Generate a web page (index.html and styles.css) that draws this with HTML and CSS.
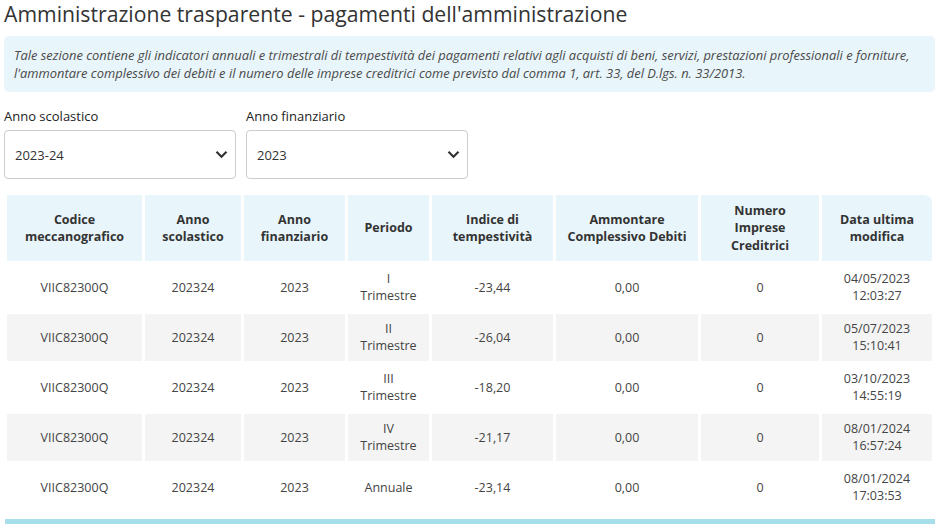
FILE: index.html
```html
<!DOCTYPE html>
<html lang="it">
<head>
<meta charset="utf-8">
<link rel="stylesheet" href="styles.css">
</head>
<body>
<div class="page">
  <h1 class="title">Amministrazione trasparente - pagamenti dell'amministrazione</h1>
  <div class="info">Tale sezione contiene gli indicatori annuali e trimestrali di tempestività dei pagamenti relativi agli acquisti di beni, servizi, prestazioni professionali e forniture, l'ammontare complessivo dei debiti e il numero delle imprese creditrici come previsto dal comma 1, art. 33, del D.lgs. n. 33/2013.</div>
  <div class="filters">
    <div class="field f1">
      <div class="label">Anno scolastico</div>
      <div class="select"><span>2023-24</span><svg class="chev" width="13" height="9" viewBox="0 0 13 9"><path d="M1.5 1.8 L6.5 6.8 L11.5 1.8" fill="none" stroke="#333" stroke-width="2.2"/></svg></div>
    </div>
    <div class="field f2">
      <div class="label">Anno finanziario</div>
      <div class="select"><span>2023</span><svg class="chev" width="13" height="9" viewBox="0 0 13 9"><path d="M1.5 1.8 L6.5 6.8 L11.5 1.8" fill="none" stroke="#333" stroke-width="2.2"/></svg></div>
    </div>
  </div>
  <table class="grid">
    <colgroup>
      <col class="c1"><col class="c2"><col class="c3"><col class="c4"><col class="c5"><col class="c6"><col class="c7"><col class="c8">
    </colgroup>
    <thead>
      <tr>
        <th>Codice<br>meccanografico</th>
        <th>Anno<br>scolastico</th>
        <th>Anno<br>finanziario</th>
        <th>Periodo</th>
        <th>Indice di<br>tempestività</th>
        <th>Ammontare<br>Complessivo Debiti</th>
        <th>Numero<br>Imprese<br>Creditrici</th>
        <th class="last">Data ultima<br>modifica</th>
      </tr>
    </thead>
    <tbody>
      <tr><td>VIIC82300Q</td><td>202324</td><td>2023</td><td>I<br>Trimestre</td><td>-23,44</td><td>0,00</td><td>0</td><td>04/05/2023<br>12:03:27</td></tr>
      <tr><td>VIIC82300Q</td><td>202324</td><td>2023</td><td>II<br>Trimestre</td><td>-26,04</td><td>0,00</td><td>0</td><td>05/07/2023<br>15:10:41</td></tr>
      <tr><td>VIIC82300Q</td><td>202324</td><td>2023</td><td>III<br>Trimestre</td><td>-18,20</td><td>0,00</td><td>0</td><td>03/10/2023<br>14:55:19</td></tr>
      <tr><td>VIIC82300Q</td><td>202324</td><td>2023</td><td>IV<br>Trimestre</td><td>-21,17</td><td>0,00</td><td>0</td><td>08/01/2024<br>16:57:24</td></tr>
      <tr><td>VIIC82300Q</td><td>202324</td><td>2023</td><td>Annuale</td><td>-23,14</td><td>0,00</td><td>0</td><td>08/01/2024<br>17:03:53</td></tr>
    </tbody>
  </table>
  <div class="bar"></div>
</div>
</body>
</html>
```

FILE: styles.css
```css
html, body {
  margin: 0;
  padding: 0;
  background: #fff;
}
body {
  font-family: "Open Sans", "Noto Sans", sans-serif;
  color: #333;
}
.page {
  padding: 0 4px;
  width: 931px;
}
.title {
  margin: 0;
  padding-top: 0;
  font-size: 21.2px;
  line-height: 28px;
  font-weight: 400;
  color: #333;
}
.info {
  margin-top: 8px;
  background: #e8f5fa;
  border-radius: 5px;
  padding: 10px 10px;
  font-size: 12.9px;
  line-height: 18px;
  font-style: italic;
  color: #4a4a4a;
}
.filters {
  display: flex;
  gap: 10px;
  margin-top: 15px;
}
.f1 { width: 232px; }
.f2 { width: 222px; }
.label {
  font-size: 13px;
  line-height: 18px;
  color: #222;
  margin-bottom: 5px;
}
.select {
  box-sizing: border-box;
  height: 49px;
  border: 1px solid #ccc;
  border-radius: 4px;
  display: flex;
  align-items: center;
  justify-content: space-between;
  padding: 0 7px 0 10px;
  font-size: 13px;
  color: #333;
}
.chev {
  display: block;
}
.grid {
  margin-top: 13px;
  width: 100%;
  border-collapse: separate;
  border-spacing: 3px;
  font-size: 12.5px;
}
.c1 { width: 135px; }
.c2 { width: 96px; }
.c3 { width: 101px; }
.c4 { width: 81px; }
.c5 { width: 121px; }
.c6 { width: 142px; }
.c7 { width: 118px; }
.c8 { width: 110px; }
.grid th {
  background: #e8f5fa;
  font-weight: 700;
  color: #333;
  line-height: 17.3px;
  padding: 7px 4px;
  text-align: center;
  vertical-align: middle;
}
.grid th.last {
  border-top-right-radius: 8px;
}
.grid td {
  text-align: center;
  vertical-align: middle;
  color: #444;
  line-height: 17.5px;
  padding: 6px 4px;
}
.grid tbody tr:nth-child(even) td {
  background: #f4f4f4;
}
.bar {
  margin-top: 5px;
  margin-left: 1px;
  height: 5px;
  background: #a6dfea;
}
```
